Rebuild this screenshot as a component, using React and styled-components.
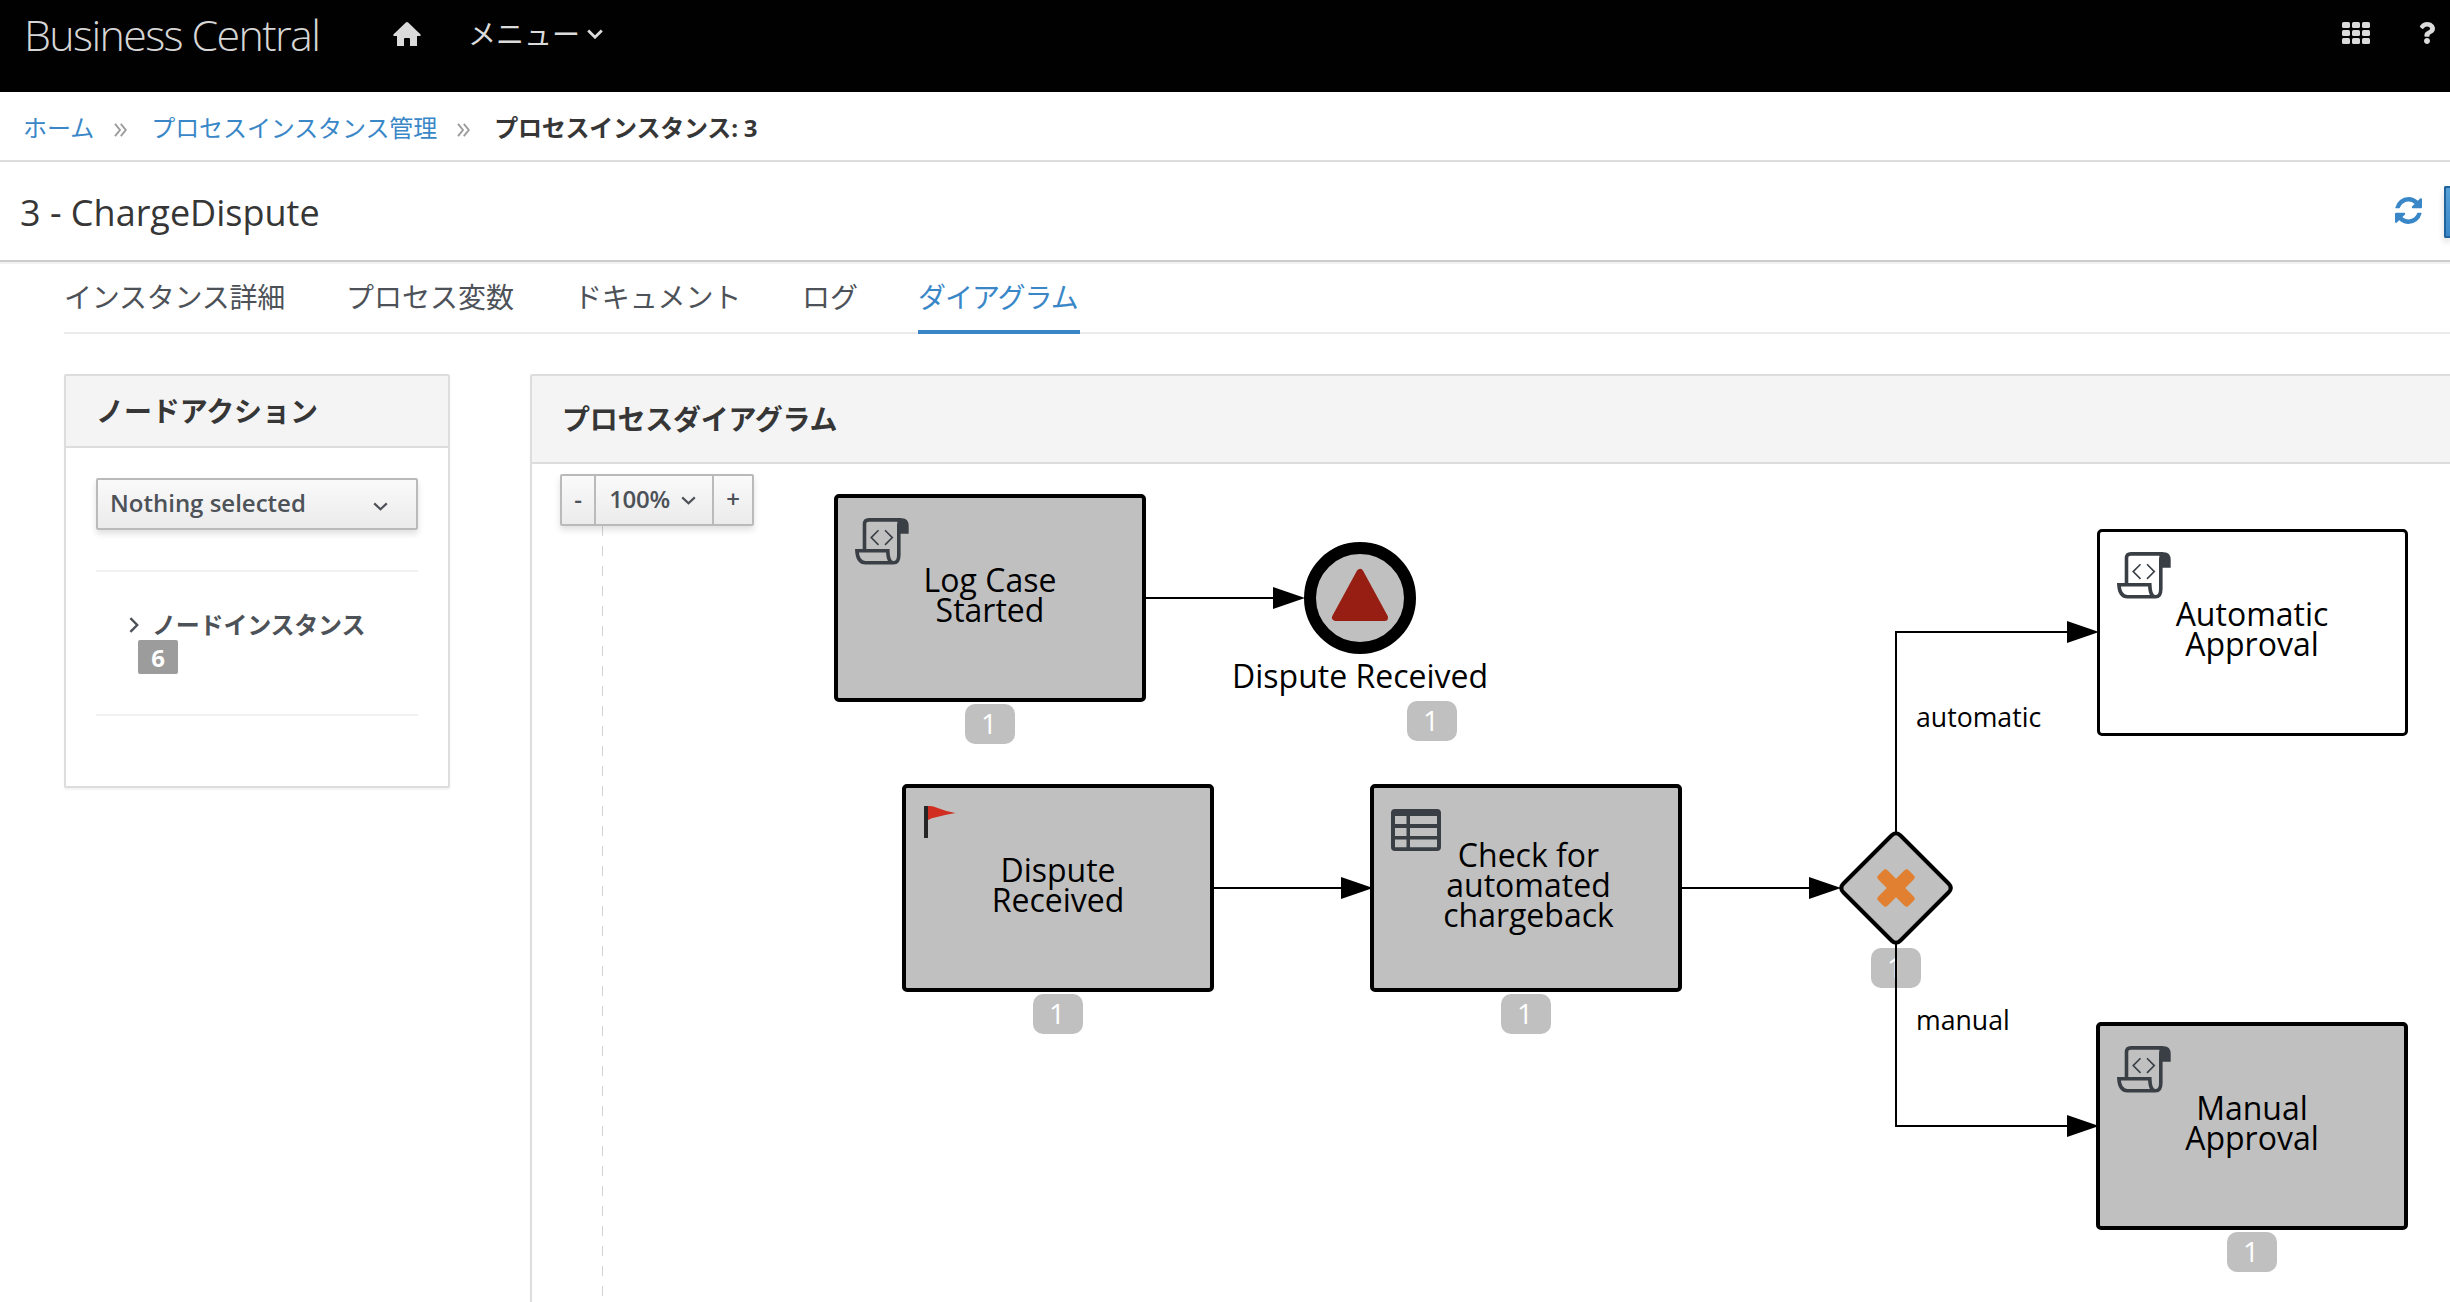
import React from "react";
import styled, { createGlobalStyle } from "styled-components";
import { FaQuestion } from "react-icons/fa";

const GlobalStyle = createGlobalStyle`
  *, *::before, *::after { box-sizing: border-box; }
  html, body { margin: 0; padding: 0; }
  body {
    background: #fff;
    color: #363636;
    font-family: "Open Sans", "Noto Sans CJK JP", sans-serif;
    overflow: hidden;
  }
`;

const Page = styled.div`
  width: 100%;
  height: 1302px;
  overflow: hidden;
  display: flex;
  flex-direction: column;
`;

const TopBar = styled.header`
  flex: none;
  height: 92px;
  background: #010101;
  color: #dbdbdb;
  display: flex;
  align-items: flex-start;
  padding: 0 12px 0 24px;
`;

const Brand = styled.div`
  width: 369px;
  font-size: 43px;
  font-weight: 300;
  line-height: 70px;
  letter-spacing: -1.65px;
  white-space: nowrap;
  color: #d6d6d6;
`;

const NavIcon = styled.span`
  display: flex;
  margin-top: 22px;
  margin-right: ${(p) => p.$gap || 0}px;
`;

const MenuLabel = styled.span`
  display: flex;
  align-items: center;
  gap: 7px;
  flex: 1;
  font-size: 28px;
  line-height: 68px;
`;

const Crumbs = styled.nav`
  flex: none;
  height: 70px;
  border-bottom: 2px solid #ddd;
  display: flex;
  align-items: center;
  padding: 3px 24px 0 23px;
  font-size: 24px;
  line-height: 36px;
  white-space: nowrap;
`;

const Crumb = styled.span`
  color: ${(p) => (p.$current ? "#363636" : "#3a87c8")};
  font-weight: ${(p) => (p.$current ? 700 : 400)};
  letter-spacing: ${(p) => p.$track || 0}px;
`;

const CrumbSeparator = styled.span`
  width: 57px;
  display: flex;
  justify-content: center;
  padding: 4px 5px 0 0;
  svg { display: block; }
`;

const TitleBar = styled.div`
  flex: none;
  height: 100px;
  border-bottom: 2px solid #ccc;
  box-shadow: 0 2px 0 #f2f2f2;
  display: flex;
  align-items: center;
  padding: 2px 0 0 20px;
`;

const Title = styled.h1`
  flex: 1;
  margin: 0;
  padding-top: 1px;
  font-size: 36px;
  font-weight: 400;
  line-height: 50px;
`;

const Refresh = styled.span`
  display: flex;
  margin: -3px 22px 0 0;
`;

const PrimaryButton = styled.button`
  flex: none;
  width: 6px;
  height: 52px;
  margin: 0;
  padding: 0;
  border: 2px solid #23639c;
  border-right: 0;
  border-radius: 2px 0 0 2px;
  background: linear-gradient(#58a1d8, #3a87c8);
  box-shadow: 0 4px 6px rgba(3, 3, 3, 0.15);
`;

const Tabs = styled.div`
  flex: none;
  height: 72px;
  margin-left: 64px;
  border-bottom: 2px solid #ebebeb;
  display: flex;
  gap: 60px;
`;

const Tab = styled.div`
  flex: none;
  width: ${(p) => p.$width}px;
  height: 72px;
  font-size: 28px;
  line-height: 70px;
  letter-spacing: ${(p) => p.$track || 0}px;
  white-space: nowrap;
  color: ${(p) => (p.$active ? "#3a87c8" : "#4d5258")};
  border-bottom: ${(p) => (p.$active ? "4px solid #3a87c8" : "0")};
`;

const Content = styled.main`
  flex: 1;
  min-height: 0;
  display: flex;
  align-items: flex-start;
  gap: 80px;
  padding: 40px 0 0 64px;
`;

const Panel = styled.section`
  border: 2px solid #ddd;
  border-radius: 2px;
  background: #fff;
  box-shadow: 0 2px 2px rgba(3, 3, 3, 0.05);
`;

const ActionPanel = styled(Panel)`
  flex: none;
  width: 386px;
  height: 414px;
`;

const DiagramPanel = styled(Panel)`
  flex: none;
  width: 1960px;
  height: 980px;
`;

const PanelHeading = styled.h2`
  margin: 0;
  height: ${(p) => p.$height}px;
  padding-left: 30px;
  border-bottom: 2px solid #ddd;
  background: #f4f4f4;
  font-size: 28px;
  font-weight: 600;
  line-height: ${(p) => p.$height - 2}px;
  letter-spacing: ${(p) => p.$track || 0}px;
  white-space: nowrap;
`;

const ActionBody = styled.div`
  padding: 30px 30px 0;
`;

const Select = styled.div`
  height: 52px;
  border: 2px solid #bababa;
  border-radius: 2px;
  background: linear-gradient(#fafafa, #ebebeb);
  box-shadow: 0 4px 6px rgba(3, 3, 3, 0.12);
  display: flex;
  align-items: center;
  justify-content: space-between;
  padding: 0 28px 2px 12px;
  color: #4d5258;
  font-size: 24px;
  font-weight: 600;
  line-height: 46px;
  svg { margin-top: 6px; }
`;

const ExpandGroup = styled.div`
  height: 146px;
  margin-top: 40px;
  border-top: 2px solid #f1f1f1;
  border-bottom: 2px solid #f1f1f1;
  padding: 34px 0 0 33px;
  color: #4d5258;
`;

const ExpandRow = styled.div`
  height: 34px;
  padding-top: 3px;
  display: flex;
  align-items: center;
  gap: 13px;
  font-size: 24px;
  font-weight: 700;
  line-height: 36px;
  letter-spacing: -0.2px;
  white-space: nowrap;
`;

const CountBadge = styled.span`
  display: block;
  width: 40px;
  height: 34px;
  margin-left: 9px;
  border-radius: 2px;
  background: #9c9c9c;
  color: #fff;
  font-size: 24px;
  font-weight: 700;
  line-height: 36px;
  text-align: center;
`;

const Canvas = styled.div`
  position: relative;
  height: 836px;
  overflow: hidden;
`;

const ZoomGroup = styled.div`
  position: relative;
  z-index: 3;
  display: inline-flex;
  margin: 10px 0 0 28px;
  height: 52px;
  border: 2px solid #bababa;
  border-radius: 2px;
  background: linear-gradient(#fafafa, #ebebeb);
  box-shadow: 0 4px 6px rgba(3, 3, 3, 0.12);
`;

const ZoomButton = styled.div`
  width: ${(p) => p.$width}px;
  display: flex;
  align-items: center;
  justify-content: center;
  gap: 11px;
  padding: 0 ${(p) => p.$shift || 0}px 2px 0;
  color: #4d5258;
  font-size: 24px;
  font-weight: 600;
  line-height: 46px;
  letter-spacing: -0.3px;
  & + & { border-left: 2px solid #bababa; }
  svg { margin-top: 2px; }
`;

const EdgeLayer = styled.svg`
  position: absolute;
  left: -532px;
  top: -464px;
  width: 2450px;
  height: 1302px;
  z-index: ${(p) => p.$layer};
  pointer-events: none;
`;

const Node = styled.div`
  position: absolute;
  left: ${(p) => p.$x - 532}px;
  top: ${(p) => p.$y - 464}px;
  width: ${(p) => p.$w || 312}px;
  height: ${(p) => p.$h || 208}px;
  padding: 0 0 7px ${(p) => p.$indent || 0}px;
  border: ${(p) => (p.$done ? 4 : 3)}px solid #000;
  border-radius: 5px;
  background: ${(p) => (p.$done ? "#c0c0c0" : "#fff")};
  display: flex;
  align-items: center;
  justify-content: center;
  color: #000;
  font-size: 32px;
  line-height: 30px;
  text-align: center;
  white-space: pre;
`;

const NodeIcon = styled.span`
  position: absolute;
  left: ${(p) => p.$x}px;
  top: ${(p) => p.$y}px;
  display: flex;
`;

const Label = styled.div`
  position: absolute;
  left: ${(p) => p.$x - 532}px;
  top: ${(p) => p.$y - 464}px;
  color: #000;
  font-size: ${(p) => p.$size}px;
  line-height: 40px;
  white-space: nowrap;
`;

const Visits = styled.div`
  position: absolute;
  left: ${(p) => p.$x - 532}px;
  top: ${(p) => p.$y - 464}px;
  width: 50px;
  height: 40px;
  padding-right: 2px;
  border-radius: 10px;
  background: #c0c0c0;
  color: #fff;
  font-size: 28px;
  line-height: 39px;
  text-align: center;
`;

const HomeIcon = () => (
  <svg width="28" height="24" viewBox="0 0 28 24" fill="#dbdbdb">
    <path d="M12.8.5Q14-.5 15.2.5L27.6 12.600Q28.200 14 26.600 14H24V24H17V17.200Q17 16 16 16H12Q11 16 11 17.200V24H4V14H1.400Q-.2 14 .4 12.600Z" />
  </svg>
);

const GridIcon = () => (
  <svg width="28" height="22" viewBox="0 0 28 22" fill="#dbdbdb">
    {[0, 8, 16].map((y) =>
      [0, 10, 20].map((x) => <rect key={`${x}-${y}`} x={x} y={y} width="8" height="6" rx="1.6" />)
    )}
  </svg>
);

const Chevron = ({ w = 15, h = 9, stroke = "#4d5258", width = 2.2 }) => (
  <svg width={w} height={h} viewBox={`0 0 ${w} ${h}`} fill="none" stroke={stroke} strokeWidth={width}>
    <path d={`M1.200 1.400L${w / 2} ${h - 1.8}L${w - 1.2} 1.400`} />
  </svg>
);

const RightChevron = () => (
  <svg width="10" height="16" viewBox="0 0 10 16" fill="none" stroke="#4d5258" strokeWidth="2.400">
    <path d="M1.400 1.200L8.200 8L1.400 14.800" />
  </svg>
);

const DoubleAngle = () => (
  <svg width="13" height="14" viewBox="0 0 13 14" fill="none" stroke="#9c9c9c" strokeWidth="1.900">
    <path d="M1 .8L6 7L1 13.200M6.800 .8L11.800 7L6.800 13.200" />
  </svg>
);

const RefreshIcon = () => (
  <svg width="27" height="27" viewBox="0 0 1536 1536" fill="#3a87c8">
    <path d="M1511 928q0 5-1 7-64 268-268 434.5t-478 166.5q-146 0-282.500-55t-243.500-157l-129 129q-19 19-45 19t-45-19-19-45v-448q0-26 19-45t45-19h448q26 0 45 19t19 45-19 45l-137 137q71 66 161 102t187 36q134 0 250-65t186-179q11-17 53-117 8-23 30-23h192q13 0 22.500 9.500t9.500 22.500zm25-800v448q0 26-19 45t-45 19h-448q-26 0-45-19t-19-45 19-45l138-138q-148-137-349-137-134 0-250 65t-186 179q-11 17-53 117-8 23-30 23h-199q-13 0-22.500-9.500t-9.500-22.500v-7q65-268 270-434.500t480-166.500q146 0 284 55.500t245 156.500l130-129q19-19 45-19t45 19 19 45z" />
  </svg>
);

const ScriptIcon = () => (
  <svg width="54" height="47" viewBox="0 0 54 47" fill="none" stroke="#393f44" strokeWidth="3.600">
    <path d="M9.500 31V6.500Q9.500 1.900 14 1.900H46" />
    <path d="M46 1Q43.800 3 43.800 7V37Q43.800 44.800 38.500 44.800H10.500Q2.600 44.800 1.900 32.700H32.800Q33 44.800 38.500 44.800" />
    <path d="M42.500 .3H47Q53.700 .6 53.700 8V15.700H44Z" fill="#393f44" stroke="none" />
    <path d="M23.500 12.300L16.200 19.600L23.500 26.900M30 12.300L37.300 19.600L30 26.900" strokeWidth="1.600" />
  </svg>
);

const TableIcon = () => (
  <svg width="50" height="42" viewBox="0 0 50 42">
    <path
      fill="#393f44"
      fillRule="evenodd"
      d="M4 0H46Q50 0 50 4V38Q50 42 46 42H4Q0 42 0 38V4Q0 0 4 0ZM4 7V15H15.500V7ZM19 7V15H46V7ZM4 19V27H15.500V19ZM19 19V27H46V19ZM4 30.500V38.200H15.500V30.500ZM19 30.500V38.200H46V30.500Z"
    />
  </svg>
);

const FlagIcon = () => (
  <svg width="32" height="32" viewBox="0 0 32 32">
    <rect width="4" height="32" fill="#262626" />
    <path d="M4 0Q8 -.3 13 1.800Q22 5.600 31.500 7Q22 8.600 13 11Q7 12 4 14Z" fill="#d12d20" />
  </svg>
);

const Arrow = ({ x, y }) => <path d={`M${x} ${y - 11}L${x + 32} ${y}L${x} ${y + 11}Z`} fill="#000" />;

const tabs = [
  { text: "インスタンス詳細", width: 222, track: -0.25 },
  { text: "プロセス変数", width: 168 },
  { text: "ドキュメント", width: 168, track: -0.15 },
  { text: "ログ", width: 56 },
  { text: "ダイアグラム", width: 162, track: -1, active: true },
];

const tasks = [
  { text: "Log Case\nStarted", x: 834, y: 494, done: true, icon: <ScriptIcon />, ix: 17, iy: 20 },
  { text: "Dispute\nReceived", x: 902, y: 784, done: true, icon: <FlagIcon />, ix: 18, iy: 18 },
  { text: "Check for\nautomated\nchargeback", x: 1370, y: 784, done: true, indent: 5, icon: <TableIcon />, ix: 17, iy: 21 },
  { text: "Automatic\nApproval", x: 2096.5, y: 528.5, w: 311, h: 207, icon: <ScriptIcon />, ix: 17.5, iy: 20.5 },
  { text: "Manual\nApproval", x: 2096, y: 1022, done: true, icon: <ScriptIcon />, ix: 17, iy: 20 },
];

const visits = [
  [965, 704],
  [1407, 701],
  [1033, 994],
  [1501, 994],
  [1871, 948],
  [2227, 1232],
];

export default function App() {
  return (
    <Page>
      <GlobalStyle />
      <TopBar>
        <Brand>Business Central</Brand>
        <NavIcon $gap={47}><HomeIcon /></NavIcon>
        <MenuLabel>
          メニュー
          <Chevron w={16} h={10} stroke="#dbdbdb" width={2.8} />
        </MenuLabel>
        <NavIcon $gap={46}><GridIcon /></NavIcon>
        <NavIcon><FaQuestion size={22} color="#dbdbdb" /></NavIcon>
      </TopBar>

      <Crumbs>
        <Crumb>ホーム</Crumb>
        <CrumbSeparator><DoubleAngle /></CrumbSeparator>
        <Crumb $track={-0.1}>プロセスインスタンス管理</Crumb>
        <CrumbSeparator><DoubleAngle /></CrumbSeparator>
        <Crumb $current $track={-0.2}>プロセスインスタンス: 3</Crumb>
      </Crumbs>

      <TitleBar>
        <Title>3 - ChargeDispute</Title>
        <Refresh><RefreshIcon /></Refresh>
        <PrimaryButton aria-label="actions" />
      </TitleBar>

      <Tabs>
        {tabs.map((t) => (
          <Tab key={t.text} $width={t.width} $track={t.track} $active={t.active}>{t.text}</Tab>
        ))}
      </Tabs>

      <Content>
        <ActionPanel>
          <PanelHeading $height={72} $track={-0.1}>ノードアクション</PanelHeading>
          <ActionBody>
            <Select>
              Nothing selected
              <Chevron />
            </Select>
            <ExpandGroup>
              <ExpandRow>
                <RightChevron />
                ノードインスタンス
              </ExpandRow>
              <CountBadge>6</CountBadge>
            </ExpandGroup>
          </ActionBody>
        </ActionPanel>

        <DiagramPanel>
          <PanelHeading $height={88} $track={-0.25}>プロセスダイアグラム</PanelHeading>
          <Canvas>
            <ZoomGroup>
              <ZoomButton $width={32}>-</ZoomButton>
              <ZoomButton $width={118} $shift={3}>100%<Chevron /></ZoomButton>
              <ZoomButton $width={40}>+</ZoomButton>
            </ZoomGroup>

            <EdgeLayer $layer={0} viewBox="0 0 2450 1302">
              <path d="M602.500 526V1302" stroke="#d3d3d3" strokeWidth="1" strokeDasharray="10 10" fill="none" />
            </EdgeLayer>

            {visits.map(([x, y]) => (
              <Visits key={`${x}-${y}`} $x={x} $y={y}>1</Visits>
            ))}

            {tasks.map((t) => (
              <Node key={t.text} $x={t.x} $y={t.y} $w={t.w} $h={t.h} $done={t.done} $indent={t.indent}>
                <NodeIcon $x={t.ix} $y={t.iy}>{t.icon}</NodeIcon>
                {t.text}
              </Node>
            ))}

            <EdgeLayer $layer={1} viewBox="0 0 2450 1302">
              <g stroke="#000" strokeWidth="2" fill="none">
                <path d="M1146 598H1275" />
                <path d="M1214 888H1343" />
                <path d="M1682 888H1811" />
                <path d="M1896 833V632H2069" />
                <path d="M1896 943V1126H2069" />
              </g>
              <circle cx="1360" cy="598" r="50" fill="#c0c0c0" stroke="#000" strokeWidth="12" />
              <path
                d="M1360 572.500L1335.500 617.500H1384.500Z"
                fill="#961e12"
                stroke="#961e12"
                strokeWidth="7"
                strokeLinejoin="round"
              />
              <path
                d="M1900.500 835.500L1948.500 883.500Q1953 888 1948.500 892.500L1900.500 940.500Q1896 945 1891.500 940.500L1843.500 892.500Q1839 888 1843.500 883.500L1891.500 835.500Q1896 831 1900.500 835.500Z"
                fill="#c0c0c0"
                stroke="#000"
                strokeWidth="4"
              />
              <g fill="#e08030">
                <rect x="1874.500" y="881.500" width="43" height="13" rx="3" transform="rotate(45 1896 888)" />
                <rect x="1874.500" y="881.500" width="43" height="13" rx="3" transform="rotate(-45 1896 888)" />
              </g>
              <Arrow x={1273} y={598} />
              <Arrow x={1341} y={888} />
              <Arrow x={1809} y={888} />
              <Arrow x={2067} y={632} />
              <Arrow x={2067} y={1126} />
            </EdgeLayer>

            <Label $x={1232} $y={656} $size={32}>Dispute Received</Label>
            <Label $x={1916} $y={697} $size={26.667}>automatic</Label>
            <Label $x={1916} $y={999.5} $size={26.667}>manual</Label>
          </Canvas>
        </DiagramPanel>
      </Content>
    </Page>
  );
}
